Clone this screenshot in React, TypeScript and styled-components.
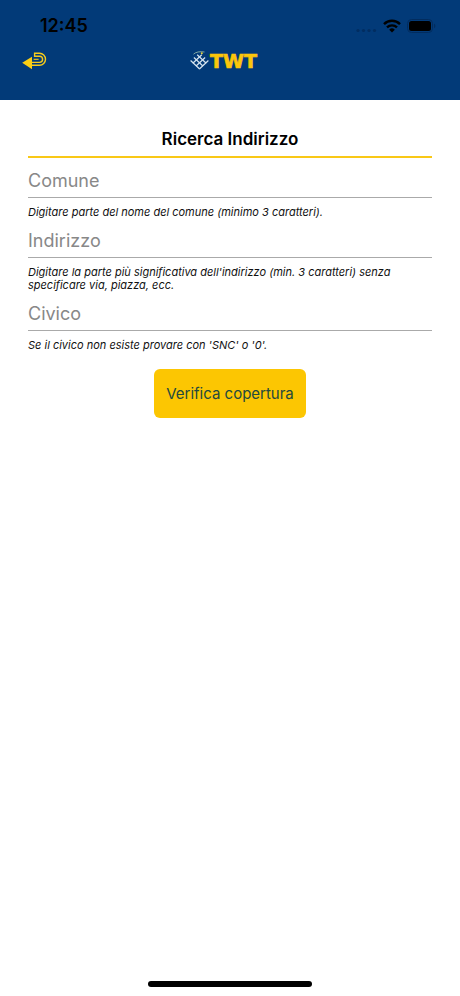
import React from "react";
import styled, { createGlobalStyle } from "styled-components";

const GlobalStyle = createGlobalStyle`
  *, *::before, *::after { box-sizing: border-box; }
  body { margin: 0; background: #fff; }
  body, input, button { font-family: Inter, "Liberation Sans", sans-serif; }
`;

const Screen = styled.div`
  display: flex;
  flex-direction: column;
  min-height: 100vh;
  background: #fff;
  color: #000;
`;

const Header = styled.header`
  background: #023a78;
  padding-bottom: 18px;
`;

const StatusBar = styled.div`
  display: flex;
  align-items: center;
  justify-content: space-between;
  height: 40px;
  padding: 12px 24px 0 40px;
`;

const Clock = styled.time`
  font-size: 18px;
  line-height: 20px;
  font-weight: 600;
`;

const StatusIcons = styled.div`
  display: flex;
  align-items: center;
  gap: 6px;

  svg { display: block; }
`;

const NavBar = styled.nav`
  display: grid;
  grid-template-columns: 1fr auto 1fr;
  align-items: center;
  height: 42px;
  padding: 0 20px;
`;

const BackButton = styled.button`
  justify-self: start;
  padding: 0;
  border: 0;
  background: none;
  cursor: pointer;

  svg { display: block; }
`;

const Logo = styled.div`
  display: flex;
  align-items: center;

  svg { display: block; }
`;

const Form = styled.form`
  display: flex;
  flex-direction: column;
  flex: 1;
  padding: 27px 28px 0;
`;

const Title = styled.h1`
  margin: 0;
  padding-bottom: 5px;
  border-bottom: 2px solid #f9c816;
  font-size: 17px;
  line-height: 24px;
  font-weight: 600;
  text-align: center;
`;

const Field = styled.div`
  padding-top: 6px;
`;

const TextInput = styled.input`
  display: block;
  width: 100%;
  height: 34px;
  padding: 0;
  border: 0;
  border-bottom: 1px solid #aaa;
  border-radius: 0;
  outline: 0;
  background: none;
  color: #000;
  font-size: 18px;

  &::placeholder { color: #888; opacity: 1; }
`;

const Hint = styled.p`
  margin: 0;
  padding-top: 8px;
  margin-bottom: -1px;
  font-size: 11px;
  line-height: 13px;
  font-style: italic;
  color: #111;
`;

const SubmitButton = styled.button`
  align-self: center;
  margin-top: 18px;
  padding: 12px;
  border: 0;
  border-radius: 6px;
  background: #fcc602;
  color: #23493f;
  font-size: 15px;
  line-height: 25px;
  cursor: pointer;
`;

const Footer = styled.footer`
  display: flex;
  justify-content: center;
  padding-bottom: 9px;
`;

const HomeIndicator = styled.div`
  width: 164px;
  height: 6px;
  border-radius: 3px;
  background: #000;
`;

const fields = [
  {
    id: "comune",
    label: "Comune",
    hint: "Digitare parte del nome del comune (minimo 3 caratteri).",
  },
  {
    id: "indirizzo",
    label: "Indirizzo",
    hint: "Digitare la parte più significativa dell'indirizzo (min. 3 caratteri) senza specificare via, piazza, ecc.",
  },
  {
    id: "civico",
    label: "Civico",
    hint: "Se il civico non esiste provare con 'SNC' o '0'.",
  },
];

function SignalDots() {
  return (
    <svg width="21" height="14" viewBox="0 0 21 14" fill="#022d60" aria-hidden="true">
      {[2, 7.5, 13, 18.5].map((x) => (
        <circle key={x} cx={x} cy="11.5" r="1.6" />
      ))}
    </svg>
  );
}

function WifiIcon() {
  return (
    <svg width="18" height="14" viewBox="0 0 18 14" fill="none" stroke="#000" strokeWidth="2.4" aria-hidden="true">
      <path d="M1 5.1a11.4 11.4 0 0 1 16 0" />
      <path d="M4 8.4a7.2 7.2 0 0 1 10 0" />
      <path d="M9 13.6l-2.8-2.9a4 4 0 0 1 5.6 0z" fill="#000" stroke="none" />
    </svg>
  );
}

function BatteryIcon() {
  return (
    <svg width="29" height="14" viewBox="0 0 29 14" aria-hidden="true">
      <rect x="0.5" y="0.5" width="25" height="13" rx="4" fill="none" stroke="#022c5e" />
      <rect x="2" y="2" width="22" height="10" rx="2.5" fill="#000" />
      <path d="M27 4.8c1.8.6 1.8 3.8 0 4.4z" fill="#022c5e" />
    </svg>
  );
}

function BackIcon() {
  return (
    <svg width="28" height="20" viewBox="0 0 28 20" fill="none" stroke="#f7cb1b" strokeWidth="1.4" aria-hidden="true">
      <path d="M2.2 11.8L12 5.8v12.4z" fill="#fbcf14" stroke="none" />
      <path d="M12 14.2h7.5a6 6 0 0 0 0-12h-4.9v3h4.9a3.1 3.1 0 0 1 0 6.2H12" />
      <path d="M13.6 8.3h5" strokeWidth="1.1" />
    </svg>
  );
}

function TwtLogo() {
  return (
    <svg width="80" height="22" viewBox="0 0 80 22" role="img" aria-label="TWT">
      <g fill="none" stroke="#d5e3ee" strokeWidth="1.2">
        <path d="M0.6 10.5l9 8.5M3.9 7.5l9 8.5M7.2 4.7l9 8.5" />
        <path d="M18.4 10.5l-9 8.5M15.1 7.5l-9 8.5M11.8 4.7l-9 8.5" />
      </g>
      <path d="M3.5 4.2C5.5 2 10 1.2 14.5 2" fill="none" stroke="#7fa6a2" strokeWidth="1" />
      <circle cx="11.8" cy="3.3" r="1" fill="#e6d23c" />
      <text x="20" y="18" fill="#fcc60b" stroke="#fcc60b" strokeWidth="0.7" fontFamily="DejaVu Sans" fontWeight="700" fontSize="19">
        TWT
      </text>
    </svg>
  );
}

export default function App() {
  return (
    <Screen>
      <GlobalStyle />
      <Header>
        <StatusBar>
          <Clock>12:45</Clock>
          <StatusIcons>
            <SignalDots />
            <WifiIcon />
            <BatteryIcon />
          </StatusIcons>
        </StatusBar>
        <NavBar>
          <BackButton type="button" aria-label="Indietro">
            <BackIcon />
          </BackButton>
          <Logo>
            <TwtLogo />
          </Logo>
        </NavBar>
      </Header>
      <Form onSubmit={(event) => event.preventDefault()}>
        <Title>Ricerca Indirizzo</Title>
        {fields.map(({ id, label, hint }) => (
          <Field key={id}>
            <TextInput id={id} name={id} placeholder={label} aria-label={label} aria-describedby={`${id}-hint`} />
            <Hint id={`${id}-hint`}>{hint}</Hint>
          </Field>
        ))}
        <SubmitButton type="submit">Verifica copertura</SubmitButton>
      </Form>
      <Footer>
        <HomeIndicator />
      </Footer>
    </Screen>
  );
}
